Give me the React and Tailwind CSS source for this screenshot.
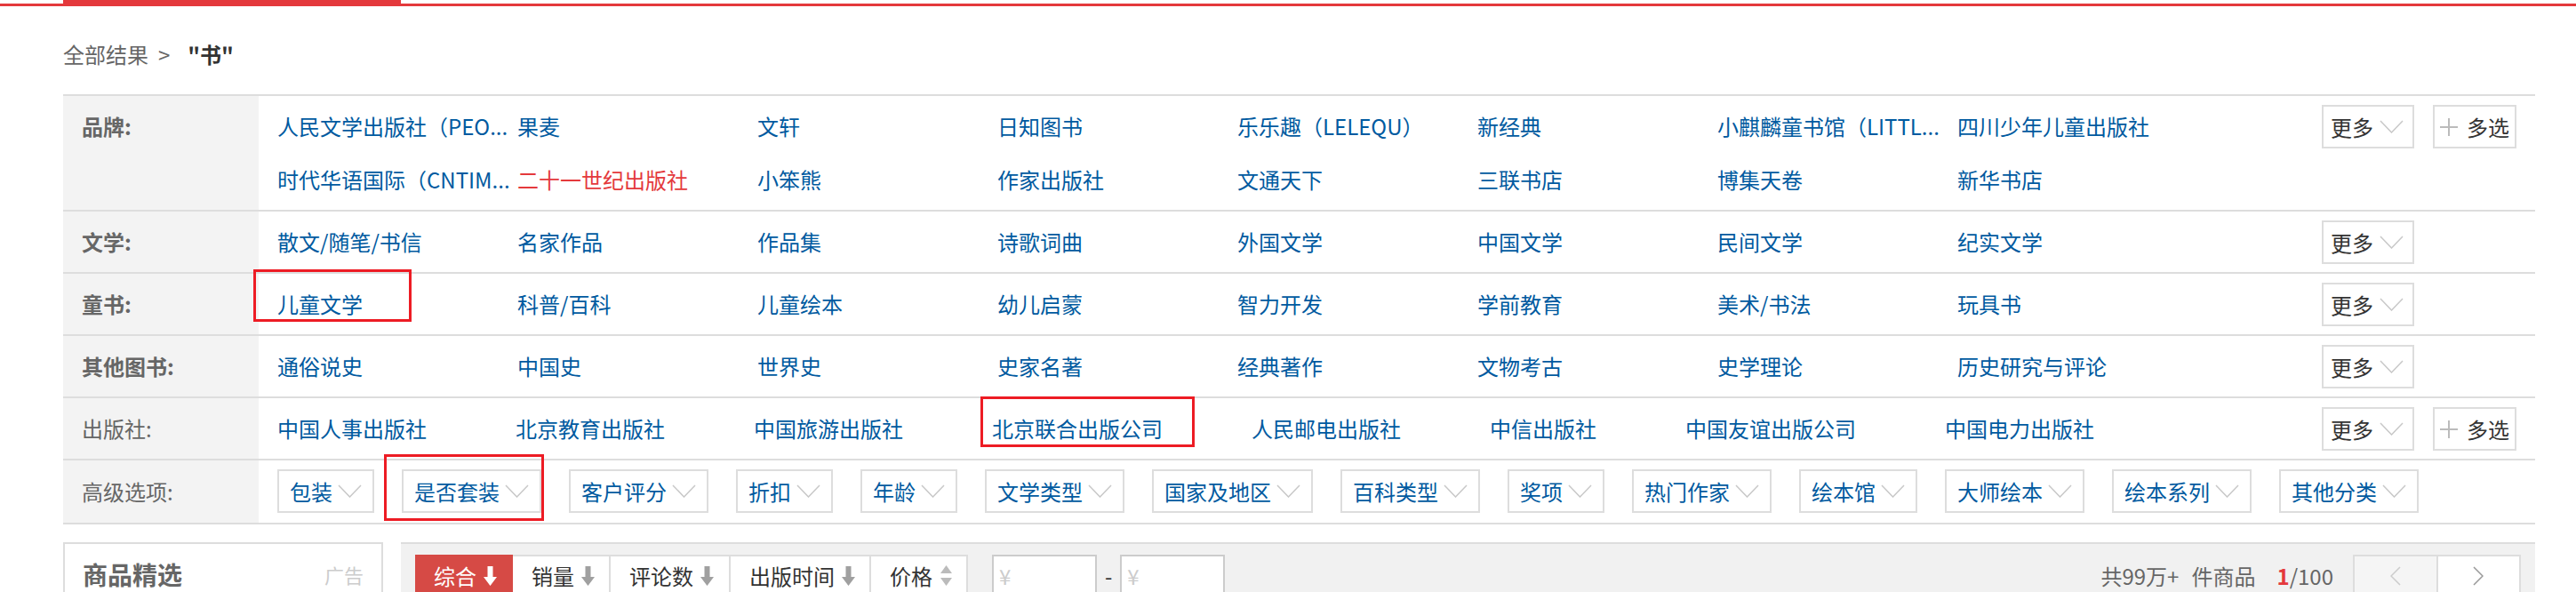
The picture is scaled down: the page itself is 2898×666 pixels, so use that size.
import React from 'react';

const brands = [
  '人民文学出版社（PEO...', '果麦', '文轩', '日知图书', '乐乐趣（LELEQU）', '新经典', '小麒麟童书馆（LITTL...', '四川少年儿童出版社',
  '时代华语国际（CNTIM...', '二十一世纪出版社', '小笨熊', '作家出版社', '文通天下', '三联书店', '博集天卷', '新华书店',
];

const categoryRows = [
  { label: '文学:', items: ['散文/随笔/书信', '名家作品', '作品集', '诗歌词曲', '外国文学', '中国文学', '民间文学', '纪实文学'] },
  { label: '童书:', items: ['儿童文学', '科普/百科', '儿童绘本', '幼儿启蒙', '智力开发', '学前教育', '美术/书法', '玩具书'] },
  { label: '其他图书:', items: ['通俗说史', '中国史', '世界史', '史家名著', '经典著作', '文物考古', '史学理论', '历史研究与评论'] },
];

const publishers = ['中国人事出版社', '北京教育出版社', '中国旅游出版社', '北京联合出版公司', '人民邮电出版社', '中信出版社', '中国友谊出版公司', '中国电力出版社'];

const advanced = ['包装', '是否套装', '客户评分', '折扣', '年龄', '文学类型', '国家及地区', '百科类型', '奖项', '热门作家', '绘本馆', '大师绘本', '绘本系列', '其他分类'];

const sorts = [
  { name: '综合', w: 'w-[110px]' },
  { name: '销量', w: 'w-[110px]' },
  { name: '评论数', w: 'w-[135px]' },
  { name: '出版时间', w: 'w-[158px]' },
];

const Chevron = () => (
  <svg width="27" height="15" viewBox="0 0 27 15" fill="none" className="shrink-0">
    <polyline points="1,1 13.5,14 26,1" stroke="#c8c8c8" strokeWidth="1.5" />
  </svg>
);

const DownArrow = ({ color }) => (
  <svg width="15" height="22" viewBox="0 0 15 22" className="shrink-0">
    <path d="M4.5 0h6v12h4.5l-7.5 10-7.5-10h4.5z" fill={color} />
  </svg>
);

const MoreBtn = () => (
  <div className="w-[104px] h-[49px] border-2 border-[#ddd] bg-white flex items-center pl-[8px] text-[#333]">
    <span className="leading-none">更多</span>
    <span className="ml-[7px]"><Chevron /></span>
  </div>
);

const MultiBtn = () => (
  <div className="w-[94px] h-[49px] border-2 border-[#ddd] bg-white flex items-center pl-[6px] text-[#333]">
    <svg width="20" height="20" viewBox="0 0 20 20" className="shrink-0">
      <path d="M10 0v20M0 10h20" stroke="#bbb" strokeWidth="2" />
    </svg>
    <span className="ml-[10px] leading-none">多选</span>
  </div>
);

const Label = ({ children, bold, top = 'pt-[4px]' }) => (
  <div className={`w-[220px] shrink-0 bg-[#f3f3f3] pl-[21px] ${top}`}>
    <span className={bold ? 'block leading-[60px] font-bold text-[#666]' : 'block leading-[60px] text-[#666]'}>{children}</span>
  </div>
);

const Row = ({ label, bold, children, multi }) => (
  <div className="flex border-b-2 border-[#ddd]">
    <Label bold={bold}>{label}</Label>
    <div className="flex-1 pl-[21px] py-[4px]">{children}</div>
    <div className="w-[240px] shrink-0 pt-[10px] flex gap-[21px]">
      <MoreBtn />
      {multi && <MultiBtn />}
    </div>
  </div>
);

export default function App() {
  return (
    <div className="relative w-[2898px] h-[666px] overflow-hidden bg-white text-[24px] font-['Noto_Sans_CJK_SC','Noto_Sans',sans-serif]">
      {/* top nav red line */}
      <div className="flex h-[7px]">
        <div className="w-[71px] mt-[4px] h-[3px] bg-[#e4393c]" />
        <div className="w-[380px] h-[7px] bg-[#e4393c]" />
        <div className="flex-1 mt-[4px] h-[3px] bg-[#e4393c]" />
      </div>

      {/* breadcrumb */}
      <div className="h-[99px] pl-[71px] pt-[38px]">
        <div className="flex items-center h-[32px] leading-[32px]">
          <span className="text-[#666]">全部结果</span>
          <span className="ml-[11px] text-[#666]">&gt;</span>
          <strong className="ml-[20px] text-[#333]">"书"</strong>
        </div>
      </div>

      {/* filter panel */}
      <div className="ml-[71px] w-[2781px] border-t-2 border-[#ddd]">
        <Row label="品牌:" bold multi>
          <div className="flex flex-wrap">
            {brands.map((b) => (
              <span
                key={b}
                className={b === '二十一世纪出版社' ? 'w-[270px] leading-[60px] whitespace-nowrap text-[#e4393c]' : 'w-[270px] leading-[60px] whitespace-nowrap text-[#005aa0]'}
              >
                {b}
              </span>
            ))}
          </div>
        </Row>

        {categoryRows.map((row) => (
          <Row key={row.label} label={row.label} bold>
            <div className="flex">
              {row.items.map((it) => (
                <span key={it} className="w-[270px] leading-[60px] whitespace-nowrap text-[#005aa0]">{it}</span>
              ))}
            </div>
          </Row>
        ))}

        <Row label="出版社:" multi>
          <div className="flex gap-[100px]">
            {publishers.map((p) => (
              <span key={p} className="leading-[60px] whitespace-nowrap text-[#005aa0]">{p}</span>
            ))}
          </div>
        </Row>

        <div className="flex border-b-2 border-[#ddd]">
          <Label top="pt-[5px]">高级选项:</Label>
          <div className="flex-1 pl-[21px] pt-[10px] pb-[11px] flex gap-[31px]">
            {advanced.map((a) => (
              <div key={a} className="h-[49px] border-2 border-[#ddd] bg-white flex items-center pl-[12px] pr-[12px] text-[#005aa0]">
                <span className="leading-none whitespace-nowrap">{a}</span>
                <span className="ml-[6px]"><Chevron /></span>
              </div>
            ))}
          </div>
        </div>
      </div>

      {/* bottom: ad box + sort bar */}
      <div className="ml-[71px] w-[2781px] mt-[20px] flex">
        <div className="w-[360px] h-[200px] shrink-0 border-2 border-[#ddd]">
          <div className="flex items-center justify-between pl-[20px] pr-[20px] pt-[14px]">
            <span className="leading-[40px] text-[28px] font-bold text-[#666]">商品精选</span>
            <span className="text-[22px] text-[#ccc]">广告</span>
          </div>
        </div>

        <div className="ml-[20px] flex-1 h-[200px] border-t-2 border-[#ddd] bg-[#f1f1f1] pt-[12px] pl-[16px] pr-[16px]">
          <div className="flex items-center">
            <div className="flex">
              {sorts.map((s, i) => (
                <div
                  key={s.name}
                  className={
                    i === 0
                      ? `${s.w} h-[48px] flex items-center pl-[21px] bg-[#d64a45] text-white`
                      : `${s.w} h-[48px] flex items-center pl-[21px] bg-white text-[#333] border-y-2 border-r-2 border-[#ddd]`
                  }
                >
                  <span className="leading-none whitespace-nowrap">{s.name}</span>
                  <span className="ml-[8px] flex"><DownArrow color={i === 0 ? '#ffffff' : '#a0a0a0'} /></span>
                </div>
              ))}
              <div className="w-[109px] h-[48px] flex items-center pl-[21px] bg-white text-[#333] border-y-2 border-r-2 border-[#ddd]">
                <span className="leading-none">价格</span>
                <svg width="15" height="24" viewBox="0 0 15 24" className="ml-[8px] shrink-0">
                  <path d="M7.5 0L14 9H1z" fill="#bbb" />
                  <path d="M1 14H14L7.5 23z" fill="#bbb" />
                </svg>
              </div>
            </div>

            <div className="ml-[27px] w-[118px] h-[48px] border-2 border-[#ccc] bg-white flex items-center pl-[6px] text-[#ccc]">¥</div>
            <span className="mx-[9px] text-[#333]">-</span>
            <div className="w-[118px] h-[48px] border-2 border-[#ccc] bg-white flex items-center pl-[6px] text-[#ccc]">¥</div>

            <div className="ml-auto flex items-center text-[#666]">
              <span>共99万+</span>
              <span className="ml-[14px]">件商品</span>
              <span className="ml-[24px]"><b className="text-[#e4393c]">1</b>/100</span>
              <div className="ml-[22px] w-[189px] h-[48px] flex border-2 border-[#ddd]">
                <div className="flex-1 bg-[#f5f5f5] flex items-center justify-center">
                  <svg width="12" height="22" viewBox="0 0 12 22" fill="none">
                    <polyline points="11,1 1,11 11,21" stroke="#ccc" strokeWidth="1.5" />
                  </svg>
                </div>
                <div className="flex-1 bg-white border-l-2 border-[#ddd] flex items-center justify-center">
                  <svg width="12" height="22" viewBox="0 0 12 22" fill="none">
                    <polyline points="1,1 11,11 1,21" stroke="#999" strokeWidth="1.5" />
                  </svg>
                </div>
              </div>
            </div>
          </div>
        </div>
      </div>

      {/* red annotation boxes */}
      <div className="absolute left-[285px] top-[303px] w-[178px] h-[59px] border-[3px] border-[#ed1c24]" />
      <div className="absolute left-[1103px] top-[446px] w-[241px] h-[57px] border-[3px] border-[#ed1c24]" />
      <div className="absolute left-[432px] top-[511px] w-[180px] h-[75px] border-[3px] border-[#ed1c24]" />
    </div>
  );
}
